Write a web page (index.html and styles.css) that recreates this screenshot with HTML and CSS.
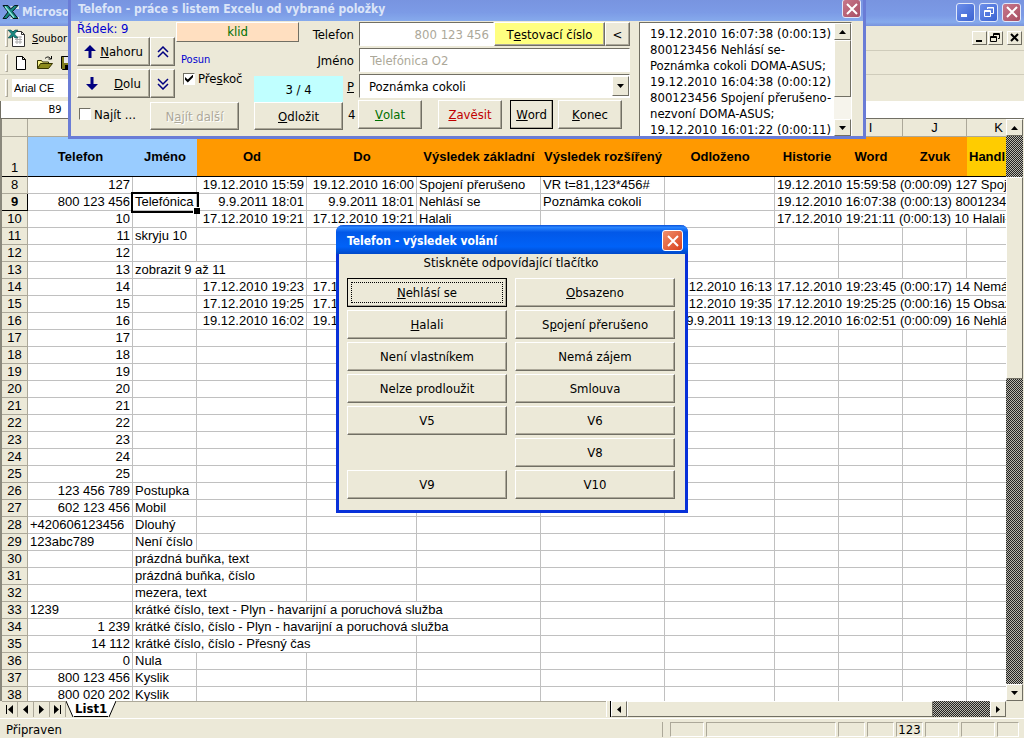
FILE: index.html
```html
<!DOCTYPE html>
<html lang="cs">
  <head>
    <meta charset="UTF-8">
    <meta name="viewport" content="width=device-width, initial-scale=1.0">
    <title>Microsoft Excel</title>
    <link rel="stylesheet" href="styles.css">
  </head>
<body>
  <div class="excel">
    <header class="titlebar">
      <svg class="logo" width="18" height="18" viewBox="0 0 18 18"><path d="M8 3h9v3h-7M9 14h8v2H8" fill="#cfe6ea"/><path d="M1 2.500h5l2.500 3.500 4-3.500h3.500l-5.500 6 5.500 7h-5l-3-4-3.500 4H1l5-6.500z" fill="#17877f" stroke="#06181c"/><path d="M3 3.500l9 11" stroke="#8fe8dc" stroke-width="1.500"/></svg>
      <span class="app-name">Microsoft Excel</span>
      <div class="window-buttons">
        <button class="xp-button" aria-label="Minimalizovat"><svg width="12" height="12"><path d="M1 8h6v3H1z" fill="#fff"/></svg></button>
        <button class="xp-button" aria-label="Obnovit"><svg width="12" height="12" fill="none" stroke="#fff"><path d="M4.500 3V1.500h6v6H8M4 2h7M1.500 4.500h6v6h-6zM1 5.500h7"/></svg></button>
        <button class="xp-button red" aria-label="Zavřít"><svg width="12" height="12"><path d="M1 1l10 10M11 1L1 11" stroke="#fff" stroke-width="2"/></svg></button>
      </div>
    </header>

    <nav class="menubar">
      <span class="grip"></span>
      <svg width="18" height="18" viewBox="0 0 18 18"><path d="M4.500 2.500h9l3 3v12h-12z" fill="#fff" stroke="#333"/><path d="M13.500 2.500v3h3" fill="none" stroke="#333"/><path d="M7 8h7M7 10.500h7M7 13h7M9 7v8M12 7v8" stroke="#aaa"/><path d="M0 1h3l2 2 2-2h3L6.500 5 10 9H7L5 7 3 9H0l3.500-4z" fill="#17877f" stroke="#0a3a40" stroke-width=".5"/></svg>
      <a href="#" class="menu-item"><u>S</u>oubor</a>
      <div class="book-buttons">
        <button aria-label="Minimalizovat sešit"><svg width="11" height="10"><path d="M2 7h6v2H2z"/></svg></button>
        <button aria-label="Obnovit sešit"><svg width="11" height="10" fill="none" stroke="#000"><path d="M3.500 3V.5h6v5H8M3 1.500h7M.5 3.500h6v5h-6zM0 4.500h7"/></svg></button>
        <button class="close-book" aria-label="Zavřít sešit"><svg width="11" height="10"><path d="M2 1l7 7M9 1L2 8" stroke="#000" stroke-width="2"/></svg></button>
      </div>
    </nav>

    <div class="toolbar">
      <span class="grip"></span>
      <button aria-label="Nový"><svg width="16" height="16" viewBox="0 0 16 16"><path d="M2.500 1.500h6l3 3v10h-9zM8.500 1.500v3h3" fill="#fff" stroke="#000"/></svg></button>
      <button aria-label="Otevřít"><svg width="18" height="16" viewBox="0 0 18 16"><path d="M1.500 13V5.500h4l1 1.500h6v2" fill="#f6f08a" stroke="#333300"/><path d="M1.500 13.500l3-5h12l-4 5z" fill="#8c8a1c" stroke="#333300"/><path d="M9 3.500c2-2 4-2 5.500 0M15.500 1v3h-3" fill="none" stroke="#000"/></svg></button>
      <button aria-label="Uložit"><svg width="16" height="16" viewBox="0 0 16 16"><path d="M1.500 1.500h13v13h-12l-1-1z" fill="#7c7a1a" stroke="#000"/><path d="M4 2h8v6H4z" fill="#e8e8e8"/><path d="M5 10h7v4H5z" fill="#000"/></svg></button>
    </div>

    <div class="toolbar format">
      <span class="grip"></span>
      <input class="font-name" type="text" value="Arial CE" aria-label="Písmo">
    </div>

    <div class="formula-bar">
      <input class="name-box" type="text" value="B9" aria-label="Pole názvů">
    </div>

    <div class="workbook">
      <div class="sheet">
        <table>
          <colgroup>
            <col class="w-head"><col class="w-phone"><col class="w-small"><col class="w-date"><col class="w-date"><col class="w-result"><col class="w-result"><col class="w-date"><col class="w-small"><col class="w-small"><col class="w-small"><col class="w-small">
          </colgroup>
          <thead>
            <tr class="letters"><th></th><th>A</th><th>B</th><th>C</th><th>D</th><th>E</th><th>F</th><th>G</th><th>H</th><th>I</th><th>J</th><th>K</th></tr>
            <tr class="names"><th>1</th><td class="blue">Telefon</td><td class="blue">Jméno</td><td>Od</td><td>Do</td><td>Výsledek základní</td><td>Výsledek rozšířený</td><td>Odloženo</td><td>Historie</td><td>Word</td><td>Zvuk</td><td class="yellow">Handl</td></tr>
          </thead>
          <tbody>
            <tr><th>8</th><td class="num">127</td><td></td><td class="num">19.12.2010 15:59</td><td class="num">19.12.2010 16:00</td><td>Spojení přerušeno</td><td>VR t=81,123*456#</td><td></td><td colspan="4">19.12.2010 15:59:58 (0:00:09) 127 Spoj</td></tr>
            <tr class="current"><th>9</th><td class="num">800 123 456</td><td class="active">Telefónica</td><td class="num">9.9.2011 18:01</td><td class="num">9.9.2011 18:01</td><td>Nehlásí se</td><td>Poznámka cokoli</td><td></td><td colspan="4">19.12.2010 16:07:38 (0:00:13) 80012345</td></tr>
            <tr><th>10</th><td class="num">10</td><td></td><td class="num">17.12.2010 19:21</td><td class="num">17.12.2010 19:21</td><td>Halali</td><td></td><td></td><td colspan="4">17.12.2010 19:21:11 (0:00:13) 10 Halali-</td></tr>
            <tr><th>11</th><td class="num">11</td><td>skryju 10</td><td></td><td></td><td></td><td></td><td></td><td></td><td></td><td></td><td></td></tr>
            <tr><th>12</th><td class="num">12</td><td></td><td></td><td></td><td></td><td></td><td></td><td></td><td></td><td></td><td></td></tr>
            <tr><th>13</th><td class="num">13</td><td colspan="2">zobrazit 9 až 11</td><td></td><td></td><td></td><td></td><td></td><td></td><td></td><td></td></tr>
            <tr><th>14</th><td class="num">14</td><td></td><td class="num">17.12.2010 19:23</td><td class="num">17.12.2010 19:23</td><td></td><td></td><td class="num">17.12.2010 16:13</td><td colspan="4">17.12.2010 19:23:45 (0:00:17) 14 Nemá</td></tr>
            <tr><th>15</th><td class="num">15</td><td></td><td class="num">17.12.2010 19:25</td><td class="num">17.12.2010 19:25</td><td></td><td></td><td class="num">17.12.2010 19:35</td><td colspan="4">17.12.2010 19:25:25 (0:00:16) 15 Obsaz</td></tr>
            <tr><th>16</th><td class="num">16</td><td></td><td class="num">19.12.2010 16:02</td><td class="num">19.12.2010 16:02</td><td></td><td></td><td class="num">9.9.2011 19:13</td><td colspan="4">19.12.2010 16:02:51 (0:00:09) 16 Nehlá</td></tr>
            <tr><th>17</th><td class="num">17</td><td></td><td></td><td></td><td></td><td></td><td></td><td></td><td></td><td></td><td></td></tr>
            <tr><th>18</th><td class="num">18</td><td></td><td></td><td></td><td></td><td></td><td></td><td></td><td></td><td></td><td></td></tr>
            <tr><th>19</th><td class="num">19</td><td></td><td></td><td></td><td></td><td></td><td></td><td></td><td></td><td></td><td></td></tr>
            <tr><th>20</th><td class="num">20</td><td></td><td></td><td></td><td></td><td></td><td></td><td></td><td></td><td></td><td></td></tr>
            <tr><th>21</th><td class="num">21</td><td></td><td></td><td></td><td></td><td></td><td></td><td></td><td></td><td></td><td></td></tr>
            <tr><th>22</th><td class="num">22</td><td></td><td></td><td></td><td></td><td></td><td></td><td></td><td></td><td></td><td></td></tr>
            <tr><th>23</th><td class="num">23</td><td></td><td></td><td></td><td></td><td></td><td></td><td></td><td></td><td></td><td></td></tr>
            <tr><th>24</th><td class="num">24</td><td></td><td></td><td></td><td></td><td></td><td></td><td></td><td></td><td></td><td></td></tr>
            <tr><th>25</th><td class="num">25</td><td></td><td></td><td></td><td></td><td></td><td></td><td></td><td></td><td></td><td></td></tr>
            <tr><th>26</th><td class="num">123 456 789</td><td>Postupka</td><td></td><td></td><td></td><td></td><td></td><td></td><td></td><td></td><td></td></tr>
            <tr><th>27</th><td class="num">602 123 456</td><td>Mobil</td><td></td><td></td><td></td><td></td><td></td><td></td><td></td><td></td><td></td></tr>
            <tr><th>28</th><td>+420606123456</td><td>Dlouhý</td><td></td><td></td><td></td><td></td><td></td><td></td><td></td><td></td><td></td></tr>
            <tr><th>29</th><td>123abc789</td><td>Není číslo</td><td></td><td></td><td></td><td></td><td></td><td></td><td></td><td></td><td></td></tr>
            <tr><th>30</th><td></td><td colspan="2">prázdná buňka, text</td><td></td><td></td><td></td><td></td><td></td><td></td><td></td><td></td></tr>
            <tr><th>31</th><td></td><td colspan="2">prázdná buňka, číslo</td><td></td><td></td><td></td><td></td><td></td><td></td><td></td><td></td></tr>
            <tr><th>32</th><td></td><td colspan="2">mezera, text</td><td></td><td></td><td></td><td></td><td></td><td></td><td></td><td></td></tr>
            <tr><th>33</th><td>1239</td><td colspan="4">krátké číslo, text - Plyn - havarijní a poruchová služba</td><td></td><td></td><td></td><td></td><td></td><td></td></tr>
            <tr><th>34</th><td class="num">1 239</td><td colspan="4">krátké číslo, číslo - Plyn - havarijní a poruchová služba</td><td></td><td></td><td></td><td></td><td></td><td></td></tr>
            <tr><th>35</th><td class="num">14 112</td><td colspan="3">krátké číslo, číslo - Přesný čas</td><td></td><td></td><td></td><td></td><td></td><td></td><td></td></tr>
            <tr><th>36</th><td class="num">0</td><td>Nula</td><td></td><td></td><td></td><td></td><td></td><td></td><td></td><td></td><td></td></tr>
            <tr><th>37</th><td class="num">800 123 456</td><td>Kyslik</td><td></td><td></td><td></td><td></td><td></td><td></td><td></td><td></td><td></td></tr>
            <tr><th>38</th><td class="num">800 020 202</td><td>Kyslik</td><td></td><td></td><td></td><td></td><td></td><td></td><td></td><td></td><td></td></tr>
          </tbody>
        </table>
      </div>
      <div class="scroll-v">
        <button aria-label="Nahoru"><svg width="7" height="4"><path d="M0 4h7L3.500 0z"/></svg></button>
        <div class="track before"></div>
        <div class="thumb"></div>
        <div class="track after"></div>
        <button aria-label="Dolů"><svg width="7" height="4"><path d="M0 0h7L3.500 4z"/></svg></button>
      </div>
    </div>

    <div class="tabs">
      <div class="tab-area">
        <button aria-label="První list"><svg width="9" height="9"><path d="M1 0h1v9H1zM8 0v9L3 4.500z"/></svg></button>
        <button aria-label="Předchozí list"><svg width="9" height="9"><path d="M7 0v9L2 4.500z"/></svg></button>
        <button aria-label="Další list"><svg width="9" height="9"><path d="M2 0v9l5-4.500z"/></svg></button>
        <button aria-label="Poslední list"><svg width="9" height="9"><path d="M1 0v9l5-4.500zM7 0h1v9H7z"/></svg></button>
        <a href="#" class="tab"><svg width="8" height="16"><path d="M0 0l7 16h1V0z" fill="#fff"/><path d="M0 0l7 16" stroke="#000"/></svg><span>List1</span><svg width="8" height="16"><path d="M8 0L1 16H0V0z" fill="#fff"/><path d="M8 0L1 16" stroke="#000"/></svg></a>
      </div>
      <span class="splitter"></span>
      <div class="scroll-h">
        <button aria-label="Vlevo"><svg width="4" height="7"><path d="M4 0v7L0 3.500z"/></svg></button>
        <div class="thumb"></div>
        <div class="track"></div>
        <button aria-label="Vpravo"><svg width="4" height="7"><path d="M0 0v7l4-3.500z"/></svg></button>
      </div>
    </div>

    <footer class="status">
      <span class="status-text">Připraven</span>
      <span class="pane p34"></span>
      <span class="pane p130"></span>
      <span class="pane p27"></span>
      <span class="pane p27"></span>
      <span class="pane p27">123</span>
      <span class="pane p34"></span>
      <span class="pane p34"></span>
      <span class="pane p22"></span>
    </footer>
  </div>

  <section class="dialog phone">
    <div class="dialog-title">
      <h2>Telefon - práce s listem Excelu od vybrané položky</h2>
      <button class="xp-button red" aria-label="Zavřít"><svg width="12" height="12"><path d="M1 1l10 10M11 1L1 11" stroke="#fff" stroke-width="2"/></svg></button>
    </div>
    <div class="phone-body">
      <div class="left">
        <div class="left-top">
          <div class="moves">
            <span class="row-label">Řádek: 9</span>
            <div class="move-grid">
              <button class="btn"><svg width="12" height="13"><path d="M6 0l6 6H7.500v7h-3V6H0z" fill="#000080"/></svg><span><u>N</u>ahoru</span></button>
              <button class="btn" aria-label="Na začátek"><svg width="12" height="12" fill="none" stroke="#000080" stroke-width="1.500"><path d="M1 6l5-5 5 5M1 11l5-5 5 5"/></svg></button>
              <button class="btn down"><svg width="12" height="13"><path d="M6 13l6-6H7.500V0h-3v7H0z" fill="#000080"/></svg><span><u>D</u>olu</span></button>
              <button class="btn" aria-label="Na konec"><svg width="12" height="12" fill="none" stroke="#000080" stroke-width="1.500"><path d="M1 1l5 5 5-5M1 6l5 5 5-5"/></svg></button>
            </div>
          </div>
          <div class="state">
            <div class="idle">klid</div>
            <div class="state-row">
              <div class="shift">
                <span class="shift-label">Posun</span>
                <label class="check"><input type="checkbox" checked>Pře<u>s</u>koč</label>
              </div>
              <div class="counter">3 / 4</div>
            </div>
          </div>
        </div>
        <div class="left-bottom">
          <label class="check"><input type="checkbox"><span>Na<u>j</u>ít ...</span></label>
          <button class="btn" disabled>N<u>a</u>jít další</button>
          <button class="btn postpone"><u>O</u>dložit</button>
        </div>
      </div>
      <div class="middle">
        <div class="field">
          <label for="phone">Telefon</label>
          <input id="phone" class="number" type="text" value="800 123 456">
          <button class="btn test">T<u>e</u>stovací číslo</button>
          <button class="btn less">&lt;</button>
        </div>
        <div class="field">
          <label for="name">Jméno</label>
          <input id="name" type="text" value="Telefónica O2">
        </div>
        <div class="field">
          <label for="note"><u>P</u></label>
          <div class="combo">
            <select id="note"><option>Poznámka cokoli</option></select>
            <span class="combo-arrow"><svg width="7" height="4"><path d="M0 0h7L3.500 4z"/></svg></span>
          </div>
        </div>
        <div class="actions">
          <span class="count">4</span>
          <button class="btn call"><u>V</u>olat</button>
          <button class="btn hang"><u>Z</u>avěsit</button>
          <button class="btn default"><u>W</u>ord</button>
          <button class="btn end"><u>K</u>onec</button>
        </div>
      </div>
      <div class="log">
        <textarea aria-label="Historie">19.12.2010 16:07:38 (0:00:13)
800123456 Nehlásí se-
Poznámka cokoli DOMA-ASUS;
19.12.2010 16:04:38 (0:00:12)
800123456 Spojení přerušeno-
nezvoní DOMA-ASUS;
19.12.2010 16:01:22 (0:00:11)</textarea>
        <div class="scroll-v light">
          <button aria-label="Historie nahoru"><svg width="7" height="4"><path d="M0 4h7L3.500 0z"/></svg></button>
          <div class="thumb"></div>
          <div class="track after"></div>
          <button aria-label="Historie dolů"><svg width="7" height="4"><path d="M0 0h7L3.500 4z"/></svg></button>
        </div>
      </div>
    </div>
  </section>

  <section class="dialog result">
    <div class="dialog-title">
      <h2>Telefon - výsledek volání</h2>
      <button class="xp-button red" aria-label="Zavřít"><svg width="12" height="12"><path d="M1 1l10 10M11 1L1 11" stroke="#fff" stroke-width="2"/></svg></button>
    </div>
    <div class="result-body">
      <p>Stiskněte odpovídající tlačítko</p>
      <div class="choices">
        <button class="btn focused"><u>N</u>ehlásí se</button>
        <button class="btn"><u>O</u>bsazeno</button>
        <button class="btn"><u>H</u>alali</button>
        <button class="btn">S<u>p</u>ojení přerušeno</button>
        <button class="btn">Není vlastníkem</button>
        <button class="btn">Nemá zájem</button>
        <button class="btn">Nelze prodloužit</button>
        <button class="btn">Smlouva</button>
        <button class="btn">V5</button>
        <button class="btn">V6</button>
        <span></span>
        <button class="btn">V8</button>
        <button class="btn">V9</button>
        <button class="btn">V10</button>
      </div>
    </div>
  </section>
</body>
</html>
```
FILE: styles.css
```css
* {
  box-sizing: border-box;
}

body {
  margin: 0;
  background: #ece9d8;
  color: #000;
  font-family: "DejaVu Sans Condensed", "DejaVu Sans", sans-serif;
  font-size: 13px;
  overflow: hidden;
}

button, input, select, textarea {
  margin: 0;
  padding: 0;
  font: inherit;
  color: inherit;
  border-radius: 0;
  outline: none;
}

button {
  display: flex;
  align-items: center;
  justify-content: center;
  background: #ece9d8;
  border: none;
  white-space: nowrap;
}

a {
  color: inherit;
  text-decoration: none;
}

svg {
  display: block;
  flex: none;
}

/* Excel window */
.excel {
  display: flex;
  flex-direction: column;
  height: 100vh;
}

.titlebar {
  display: flex;
  align-items: center;
  height: 26px;
  padding: 0 3px 2px 2px;
  background: linear-gradient(#7894e0, #7c9be6 60%, #86aaec 85%, #7892dc);
  color: #dbe5f8;
  font-size: 12px;
  font-weight: bold;
}

.app-name {
  margin-left: 2px;
  flex: 1;
}

.window-buttons {
  display: flex;
  gap: 4px;
}

.xp-button {
  width: 19px;
  height: 19px;
  border: 1px solid #e0e8fa;
  border-radius: 3px;
  background: linear-gradient(135deg, #6d8fea, #3b63d2);
}

.xp-button.red {
  background: linear-gradient(135deg, #c8788c, #a84e62);
}

.menubar, .toolbar {
  display: flex;
  align-items: center;
  height: 24px;
  padding-left: 5px;
  border-bottom: 1px solid #cfccbb;
}

.menubar {
  height: 25px;
}

.grip {
  width: 3px;
  height: 18px;
  border: 1px solid #aca899;
  border-top-color: #fff;
  border-left-color: #fff;
}

.menu-item {
  margin-left: 6px;
  flex: 1;
  font-size: 11px;
}

.book-buttons {
  display: flex;
  gap: 1px;
  padding-right: 2px;
}

.book-buttons button {
  width: 15px;
  height: 14px;
  border: 1px solid #716f64;
  border-top-color: #fff;
  border-left-color: #fff;
}

.book-buttons .close-book {
  margin-left: 3px;
}

.toolbar {
  gap: 6px;
}

.toolbar.format {
  gap: 4px;
  height: 26px;
  border-bottom: none;
}

.font-name {
  width: 120px;
  height: 18px;
  padding-left: 2px;
  border: none;
  background: #fff;
  font-family: "Liberation Sans", Arial, sans-serif;
  font-size: 11px;
}

.formula-bar {
  height: 17px;
  background: #fff;
  border-left: 1px solid #716f64;
}

.name-box {
  display: block;
  width: 108px;
  height: 17px;
  border: none;
  background: none;
  font-size: 11px;
  text-align: center;
}

/* Sheet */
.workbook {
  display: flex;
  flex: 1;
  min-height: 0;
  padding-right: 1px;
  border-top: 1px solid #716f64;
}

.sheet {
  flex: 1;
  min-width: 0;
  overflow: hidden;
  border-left: 2px solid #8a887c;
  background: #fff;
}

table {
  width: 1029px;
  table-layout: fixed;
  border-spacing: 0;
  font-family: "Liberation Sans", Arial, sans-serif;
  font-size: 13px;
}

.w-head { width: 26px; }
.w-phone { width: 105px; }
.w-small { width: 64px; }
.w-date { width: 110px; }
.w-result { width: 124px; }

th, td {
  height: 17px;
  padding: 0 2px;
  line-height: 16px;
  border-right: 1px solid #c0c0c0;
  border-bottom: 1px solid #c0c0c0;
  text-align: left;
  white-space: nowrap;
}

th {
  padding: 0;
  background: #ece9d8;
  border-color: #aca899;
  font-weight: normal;
  text-align: center;
}

.num {
  text-align: right;
}

.letters th {
  height: 18px;
}

.names th {
  height: 40px;
  vertical-align: bottom;
  border-bottom-color: #000;
}

.names td {
  padding: 0;
  background: #ff9900;
  border-right: none;
  border-bottom-color: #000;
  font-weight: bold;
  text-align: center;
}

.names .blue {
  background: #99ccff;
}

.names .yellow {
  padding-left: 2px;
  background: #ffcc00;
  text-align: left;
}

.current th {
  font-weight: bold;
  border-color: #000;
}

.active {
  position: relative;
  outline: 2px solid #000;
}

.active::after {
  content: "";
  position: absolute;
  right: -4px;
  bottom: -4px;
  width: 6px;
  height: 6px;
  background: #000;
  border: 1px solid #fff;
  border-right: none;
  border-bottom: none;
}

/* Scrollbars */
.scroll-v {
  display: flex;
  flex-direction: column;
  width: 17px;
}

.scroll-v button, .scroll-h button, .thumb, .combo-arrow {
  background: #ece9d8;
  border: 1px solid #716f64;
  border-top-color: #fff;
  border-left-color: #fff;
}

.scroll-v button {
  height: 17px;
}

.track {
  background: repeating-conic-gradient(#222 0 25%, #b8b6ac 0 50%) 0 0 / 2px 2px;
}

.scroll-v .before {
  height: 41px;
}

.scroll-v .thumb {
  height: 202px;
}

.scroll-v .after {
  flex: 1;
}

.tabs {
  display: flex;
  height: 17px;
  padding: 0 18px 1px 2px;
}

.tab-area {
  display: flex;
  flex: 604;
  border-top: 1px solid #aca899;
}

.tab-area button {
  width: 16px;
  border-right: 1px solid #aca899;
}

.tab {
  display: flex;
  height: 16px;
  margin-top: -1px;
  font-weight: bold;
  line-height: 15px;
}

.tab span {
  padding: 0 1px;
  background: #fff;
  border-bottom: 1px solid #000;
}

.splitter {
  width: 5px;
  border-left: 1px solid #fff;
  border-right: 1px solid #000;
}

.scroll-h {
  display: flex;
  flex: 395;
}

.scroll-h button {
  width: 16px;
}

.scroll-h .thumb {
  flex: 306;
}

.scroll-h .track {
  flex: 57;
}

.status {
  display: flex;
  align-items: center;
  gap: 2px;
  height: 20px;
  padding: 2px 5px 0 6px;
  border-top: 1px solid #fff;
}

.status-text {
  flex: 1;
  margin-right: 5px;
  border-right: 1px solid #aca899;
}

.pane {
  height: 15px;
  line-height: 14px;
  border: 1px solid #fff;
  border-top-color: #aca899;
  border-left-color: #aca899;
  text-align: center;
}

.p22 { width: 22px; }
.p27 { width: 27px; }
.p34 { width: 34px; }
.p130 { width: 130px; }

/* Dialogs */
.dialog {
  position: absolute;
  background: #ece9d8;
}

.dialog-title {
  display: flex;
  align-items: center;
  justify-content: space-between;
}

.dialog-title h2 {
  margin: 0;
  font-size: 12px;
}

.btn {
  border: 1px solid #716f64;
  border-top-color: #fff;
  border-left-color: #fff;
  box-shadow: inset -1px -1px #aca899;
}

.phone {
  top: 0;
  left: 68px;
  width: 798px;
  border: 3px solid #6a7cd6;
  border-top: none;
}

.phone .dialog-title {
  height: 21px;
  padding: 0 2px 4px 7px;
  background: linear-gradient(#7894e0, #7c9be6 60%, #86aaec);
  color: #dbe5f8;
}

.phone-body {
  display: flex;
  height: 115px;
  padding: 0 11px 0 6px;
}

.left {
  flex: none;
  width: 266px;
}

.left-top {
  display: flex;
  height: 81px;
}

.moves {
  width: 99px;
}

.row-label, .shift-label {
  display: block;
  height: 16px;
  line-height: 16px;
  color: #0000d0;
}

.move-grid {
  display: grid;
  grid-template-columns: 73px 25px;
  row-gap: 3px;
}

.move-grid .btn {
  height: 29px;
  gap: 4px;
}

.move-grid .down {
  gap: 16px;
}

.state {
  flex: 1;
  padding-top: 1px;
}

.idle {
  width: 123px;
  height: 20px;
  line-height: 18px;
  background: #ffdfc0;
  border: 1px solid #716f64;
  border-top-color: #fff;
  border-left-color: #fff;
  color: #007000;
  text-align: center;
}

.state-row {
  display: flex;
  height: 60px;
}

.shift {
  width: 78px;
  padding: 10px 0 0 5px;
}

.shift-label {
  font-size: 11px;
}

.check {
  display: flex;
  align-items: center;
  white-space: nowrap;
}

.shift .check {
  padding: 3px 0 0 2px;
}

.check input {
  appearance: none;
  flex: none;
  width: 12px;
  height: 12px;
  margin-right: 3px;
  background: #fff;
  border: 1px solid #fff;
  border-top-color: #716f64;
  border-left-color: #716f64;
}

.check input:checked::before {
  content: "";
  display: block;
  width: 8px;
  height: 8px;
  margin: 1px;
  background: #000;
  clip-path: polygon(0 30%, 35% 62%, 100% 0, 100% 35%, 35% 100%, 0 65%);
}

.counter {
  flex: 1;
  align-self: flex-end;
  height: 26px;
  line-height: 28px;
  background: #c0ffff;
  text-align: center;
}

.left-bottom {
  display: flex;
  height: 28px;
}

.left-bottom .check {
  width: 73px;
  padding: 0 0 4px 2px;
}

.left-bottom .btn {
  width: 89px;
}

.left-bottom .postpone {
  margin-left: auto;
}

.btn:disabled {
  color: #aca899;
  text-shadow: 1px 1px #fff;
}

.middle {
  display: flex;
  flex-direction: column;
  flex: 1;
  gap: 2px;
  min-width: 0;
  padding-top: 1px;
}

.field {
  display: flex;
  height: 24px;
}

.field label {
  display: flex;
  flex: none;
  align-items: center;
  justify-content: flex-end;
  width: 11px;
  margin-right: 5px;
  white-space: nowrap;
}

.field input, .combo {
  flex: 1;
  min-width: 0;
  padding: 0 10px;
  background: #fff;
  border: 1px solid #fff;
  border-top-color: #716f64;
  border-left-color: #716f64;
}

.field input {
  color: #aca899;
}

.field .number {
  padding-right: 4px;
  text-align: right;
}

.field .test {
  width: 111px;
  background: #ffff80;
}

.field .less {
  width: 25px;
}

.combo {
  display: grid;
  grid-template-columns: 1fr 17px;
  padding: 0;
}

.combo select {
  appearance: none;
  grid-area: 1 / 1 / 2 / 3;
  padding: 0 9px;
  border: none;
  background: none;
}

.combo-arrow {
  grid-area: 1 / 2;
  display: flex;
  align-items: center;
  justify-content: center;
  margin: 1px 0;
  pointer-events: none;
}

.actions {
  display: flex;
  align-items: center;
  height: 29px;
}

.count {
  width: 15px;
  padding-left: 5px;
}

.actions .btn {
  width: 64px;
  height: 29px;
}

.actions .call {
  color: #007000;
}

.actions .hang {
  margin: 0 8px 0 16px;
  color: #c00000;
}

.actions .default {
  width: 43px;
  border: 1px solid #000;
}

.actions .end {
  margin-left: 5px;
}

.log {
  display: flex;
  flex: none;
  width: 213px;
  margin: 1px 0 0 9px;
  border: 1px solid #716f64;
  border-right-color: #fff;
  border-bottom: none;
  background: #fff;
}

.log textarea {
  flex: 1;
  min-width: 0;
  padding: 3px 0 0 10px;
  border: none;
  background: #fff;
  line-height: 16px;
  white-space: pre;
  overflow: hidden;
  resize: none;
}

.light .thumb {
  height: 57px;
}

.light .track {
  background: #f6f4ec;
}

.result {
  top: 225px;
  left: 336px;
  width: 352px;
  border: 3px solid #0831d9;
  border-top: none;
  border-radius: 7px 7px 0 0;
}

.result .dialog-title {
  height: 29px;
  margin: 0 -3px;
  padding: 2px 5px 0 11px;
  border-radius: 7px 7px 0 0;
  background: linear-gradient(#0a50d8, #2a86ff 8%, #0258e8 25%, #0062f8 75%, #0048c8);
  color: #fff;
}

.result .xp-button {
  width: 21px;
  height: 21px;
  border-color: #fff;
  background: linear-gradient(135deg, #f0906c, #d8401c);
}

.result-body {
  padding: 0 10px 11px 8px;
}

.result p {
  height: 24px;
  margin: 0;
  line-height: 18px;
  text-align: center;
}

.choices {
  display: grid;
  grid-template-columns: 1fr 1fr;
  gap: 3px 8px;
}

.choices .btn {
  height: 29px;
}

.choices .focused {
  border: 1px solid #000;
  outline: 1px dotted #000;
  outline-offset: -5px;
}
```
